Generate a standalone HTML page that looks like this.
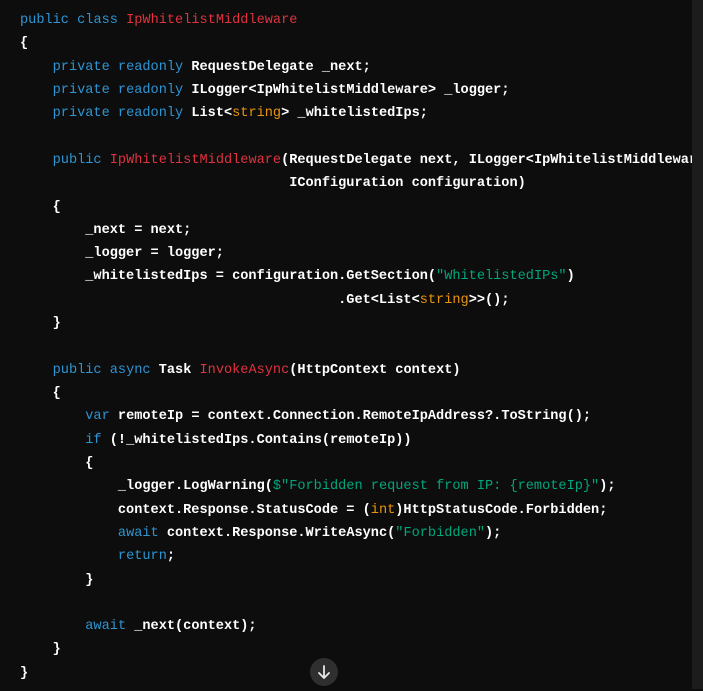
<!DOCTYPE html>
<html><head><meta charset="utf-8"><style>
html,body{margin:0;padding:0;width:703px;height:689px;overflow:hidden;background:#0d0d0d}
.wrap{position:absolute;left:0;top:0;width:692px;height:689px;overflow:hidden}
pre{margin:0;position:absolute;left:20px;top:9px;font-family:"Liberation Mono",monospace;font-size:13.6px;line-height:23.32px;color:#fff;font-weight:bold;white-space:pre}
.k{color:#2e95d3;font-weight:normal}.c{color:#e0323f;font-weight:normal}.s{color:#00a67d;font-weight:normal}.o{color:#e9950c;font-weight:normal}
.sb{position:absolute;left:692px;top:0;width:11px;height:689px;background:#1c1c1c}
.btn{position:absolute;left:310px;top:658px;width:28px;height:28px;border-radius:50%;background:#2f2f2f}
</style></head><body>
<div class="wrap"><pre><span class="k">public</span> <span class="k">class</span> <span class="c">IpWhitelistMiddleware</span>
{
    <span class="k">private</span> <span class="k">readonly</span> RequestDelegate _next;
    <span class="k">private</span> <span class="k">readonly</span> ILogger&lt;IpWhitelistMiddleware&gt; _logger;
    <span class="k">private</span> <span class="k">readonly</span> List&lt;<span class="o">string</span>&gt; _whitelistedIps;

    <span class="k">public</span> <span class="c">IpWhitelistMiddleware</span>(RequestDelegate next, ILogger&lt;IpWhitelistMiddleware&gt; logger,
                                 IConfiguration configuration)
    {
        _next = next;
        _logger = logger;
        _whitelistedIps = configuration.GetSection(<span class="s">"WhitelistedIPs"</span>)
                                       .Get&lt;List&lt;<span class="o">string</span>&gt;&gt;();
    }

    <span class="k">public</span> <span class="k">async</span> Task <span class="c">InvokeAsync</span>(HttpContext context)
    {
        <span class="k">var</span> remoteIp = context.Connection.RemoteIpAddress?.ToString();
        <span class="k">if</span> (!_whitelistedIps.Contains(remoteIp))
        {
            _logger.LogWarning(<span class="s">$"Forbidden request from IP: {remoteIp}"</span>);
            context.Response.StatusCode = (<span class="o">int</span>)HttpStatusCode.Forbidden;
            <span class="k">await</span> context.Response.WriteAsync(<span class="s">"Forbidden"</span>);
            <span class="k">return</span>;
        }

        <span class="k">await</span> _next(context);
    }
}</pre></div>
<div class="sb"></div>
<div class="btn"><svg width="28" height="28" viewBox="0 0 28 28"><path d="M14 8v12M9 15l5 5 5-5" stroke="#e8e8e8" stroke-width="1.8" fill="none" stroke-linecap="round" stroke-linejoin="round"/></svg></div>
</body></html>
